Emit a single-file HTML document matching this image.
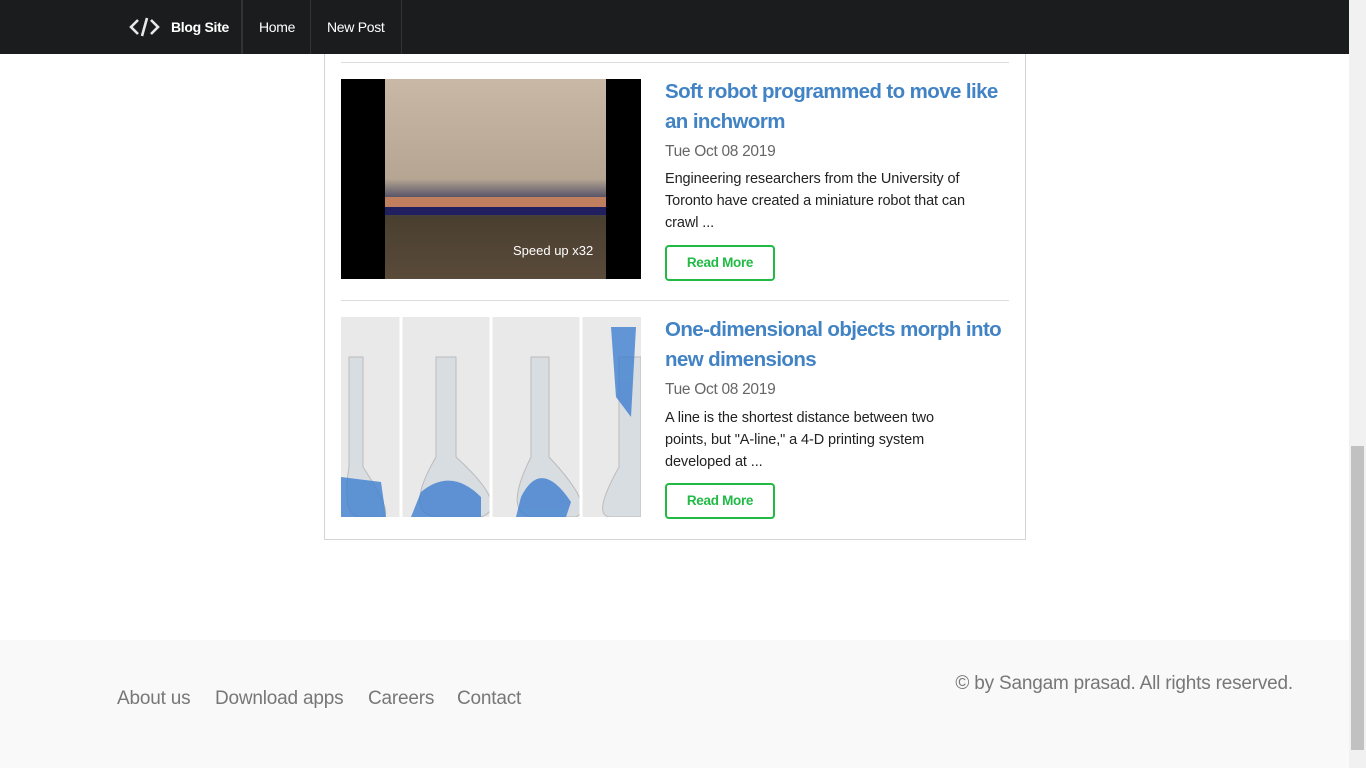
<!DOCTYPE html>
<html><head><meta charset="utf-8">
<style>
*{box-sizing:border-box;margin:0;padding:0}
body{width:1366px;height:768px;overflow:hidden;font-family:"Liberation Sans",sans-serif;background:#fff;position:relative}
.nav{position:absolute;left:0;top:0;width:1349px;height:54px;background:#1b1c1d;color:#fff;font-size:14px;z-index:10;letter-spacing:-0.3px}
.nav .item{position:absolute;top:0;height:54px;line-height:54px;border-right:1px solid #333}
.scroll{position:absolute;right:0;top:0;width:17px;height:768px;background:#f1f1f1}
.scroll div{position:absolute;left:2px;right:2px;top:446px;bottom:18px;background:#c1c1c1}
.card{position:absolute;left:324px;top:40px;width:702px;height:500px;border:1px solid #d4d4d5;border-top:none;background:#fff}
.hr{position:absolute;left:341px;width:668px;height:1px;background:#ddd}
.title{position:absolute;left:665px;width:360px;font-size:20.5px;font-weight:bold;color:#4183c4;line-height:30px;letter-spacing:-0.6px;white-space:nowrap}
.date{position:absolute;left:665px;font-size:15.5px;color:#666;letter-spacing:-0.3px}
.desc{position:absolute;left:665px;width:360px;font-size:14.5px;color:#222;line-height:22px;letter-spacing:-0.1px;white-space:nowrap}
.btn{position:absolute;left:665px;width:110px;height:36px;border:2px solid #21ba45;border-radius:4px;color:#21ba45;font-weight:bold;font-size:13.5px;text-align:center;line-height:32px;letter-spacing:-0.3px}
.footer{position:absolute;left:0;top:640px;width:1349px;height:128px;background:#f9f9f9}
.footer a{position:absolute;top:48px;font-size:19px;color:#777;text-decoration:none;letter-spacing:-0.2px}
</style></head><body>
<div class="nav">
  <svg style="position:absolute;left:129px;top:16px" width="31" height="22" viewBox="0 0 31 22"><path d="M9 4 L2 11 L9 18 M22 4 L29 11 L22 18 M18 2 L13 20" stroke="#e8e8e8" stroke-width="2.6" fill="none"/></svg>
  <div class="item" style="left:171px;width:71px;font-weight:bold">Blog Site</div>
  <div class="item" style="left:242px;width:69px;padding-left:16px;border-left:1px solid #333">Home</div>
  <div class="item" style="left:311px;width:91px;padding-left:16px">New Post</div>
</div>
<div class="card"></div>
<div class="hr" style="top:62px"></div>
<div style="position:absolute;left:341px;top:79px;width:300px;height:200px;background:#000">
  <div style="position:absolute;left:44px;top:0;width:221px;height:200px;background:linear-gradient(#c9b8a6,#b5a592 50%,#3a3a5a 62%,#4a4030 70%,#5a4a3a)"></div>
  <div style="position:absolute;left:44px;top:118px;width:221px;height:10px;background:#c08060"></div>
  <div style="position:absolute;left:44px;top:128px;width:221px;height:8px;background:#202060"></div>
  <span style="position:absolute;left:172px;top:164px;color:#fff;font-size:13px">Speed up x32</span>
</div>
<div class="title" style="top:77px">Soft robot programmed to move like<br>an inchworm</div>
<div class="date" style="top:143px">Tue Oct 08 2019</div>
<div class="desc" style="top:168px">Engineering researchers from the University of<br>Toronto have created a miniature robot that can<br>crawl ...</div>
<div class="btn" style="top:245px">Read More</div>
<div class="hr" style="top:300px"></div>
<div style="position:absolute;left:341px;top:317px;width:300px;height:200px;background:#e9e9ea;overflow:hidden">
  <svg width="300" height="200"><g fill="#d8dde2" stroke="#bbb">
  <path d="M8 40 L8 150 Q0 200 20 200 L40 200 Q55 200 22 150 L22 40Z"/>
  <path d="M95 40 L95 140 Q60 200 100 200 L140 200 Q170 190 115 140 L115 40Z"/>
  <path d="M190 40 L190 140 Q160 200 195 200 L235 200 Q255 190 208 140 L208 40Z"/>
  <path d="M278 40 L278 150 Q250 200 270 200 L300 200 L300 40Z"/></g>
  <g fill="#3f7fd0" opacity=".8"><path d="M0 160 L40 165 L45 200 L0 200Z"/><path d="M80 175 Q110 150 140 180 L140 200 L70 200Z"/><path d="M180 180 Q200 140 230 185 L225 200 L175 200Z"/><path d="M270 10 L295 10 L290 100 L275 80Z"/></g>
  <g stroke="#fff" stroke-width="3"><line x1="60" y1="0" x2="60" y2="200"/><line x1="150" y1="0" x2="150" y2="200"/><line x1="240" y1="0" x2="240" y2="200"/></g></svg>
</div>
<div class="title" style="top:315px">One-dimensional objects morph into<br>new dimensions</div>
<div class="date" style="top:381px">Tue Oct 08 2019</div>
<div class="desc" style="top:407px">A line is the shortest distance between two<br>points, but "A-line," a 4-D printing system<br>developed at ...</div>
<div class="btn" style="top:483px">Read More</div>
<div class="footer">
  <a style="left:117px">About us</a>
  <a style="left:215px">Download apps</a>
  <a style="left:368px">Careers</a>
  <a style="left:457px">Contact</a>
  <a style="right:56px;top:33px">© by Sangam prasad. All rights reserved.</a>
</div>
<div class="scroll"><div></div></div>
</body></html>
